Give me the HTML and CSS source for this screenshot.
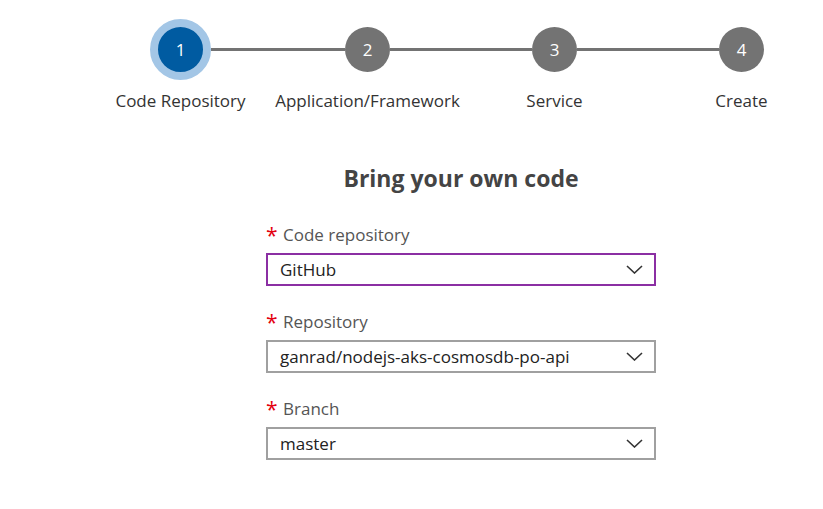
FILE: index.html
```html
<!DOCTYPE html>
<html>
<head>
<meta charset="utf-8">
<link rel="stylesheet" href="styles.css">
</head>
<body>
<div class="page">
  <ol class="steps">
    <li class="step step-first step-active">
      <div class="track"><span class="seg"></span><span class="dot"><span class="num">1</span></span><span class="seg"></span></div>
      <div class="label">Code Repository</div>
    </li>
    <li class="step">
      <div class="track"><span class="seg"></span><span class="dot"><span class="num">2</span></span><span class="seg"></span></div>
      <div class="label">Application/Framework</div>
    </li>
    <li class="step">
      <div class="track"><span class="seg"></span><span class="dot"><span class="num">3</span></span><span class="seg"></span></div>
      <div class="label">Service</div>
    </li>
    <li class="step step-last">
      <div class="track"><span class="seg"></span><span class="dot"><span class="num">4</span></span><span class="seg"></span></div>
      <div class="label">Create</div>
    </li>
  </ol>

  <main class="form">
    <h1 class="title">Bring your own code</h1>

    <div class="field">
      <div class="field-label"><span class="req">*</span>Code repository</div>
      <div class="select select-focused"><span class="value">GitHub</span>
        <svg class="chev" width="17" height="9" viewBox="0 0 17 9"><path d="M1 1 L8.5 8 L16 1" fill="none" stroke="#333" stroke-width="1.6"/></svg>
      </div>
    </div>

    <div class="field">
      <div class="field-label"><span class="req">*</span>Repository</div>
      <div class="select"><span class="value">ganrad/nodejs-aks-cosmosdb-po-api</span>
        <svg class="chev" width="17" height="9" viewBox="0 0 17 9"><path d="M1 1 L8.5 8 L16 1" fill="none" stroke="#333" stroke-width="1.6"/></svg>
      </div>
    </div>

    <div class="field">
      <div class="field-label"><span class="req">*</span>Branch</div>
      <div class="select"><span class="value">master</span>
        <svg class="chev" width="17" height="9" viewBox="0 0 17 9"><path d="M1 1 L8.5 8 L16 1" fill="none" stroke="#333" stroke-width="1.6"/></svg>
      </div>
    </div>
  </main>
</div>
</body>
</html>
```

FILE: styles.css
```css
* { box-sizing: border-box; }
html, body { margin: 0; padding: 0; background: #fff; overflow: hidden; }
body {
  font-family: "Open Sans", "Noto Sans", "Liberation Sans", sans-serif;
  color: #333;
  width: 823px;
  height: 509px;
}
.page { padding-top: 19px; }

.steps {
  list-style: none;
  margin: 0 0 0 87px;
  padding: 0;
  display: grid;
  grid-template-columns: repeat(4, 187px);
  width: 748px;
}
.step { display: flex; flex-direction: column; align-items: center; }
.track {
  display: flex;
  align-items: center;
  width: 100%;
  height: 61px;
}
.seg { flex: 1; height: 3px; background: #737373; }
.step-first .seg:first-child,
.step-last .seg:last-child { background: transparent; }
.dot {
  width: 45px;
  height: 45px;
  border-radius: 50%;
  background: #737373;
  color: #fff;
  display: flex;
  align-items: center;
  justify-content: center;
  flex: none;
}
.step-active .dot {
  width: 61px;
  height: 61px;
  background: #005ba1;
  border: 8px solid #a3c6e6;
}
.num { font-size: 17px; line-height: 1; }
.label {
  margin-top: 9px;
  font-size: 17px;
  line-height: 24px;
  color: #333;
  white-space: nowrap;
}

.form {
  margin-left: 266px;
  width: 390px;
}
.title {
  margin: 49px 0 0;
  text-align: center;
  font-size: 23px;
  font-weight: 700;
  color: #444;
  line-height: 32px;
}
.field { margin-top: 29px; }
.field + .field { margin-top: 24px; }
.field-label {
  font-size: 17px;
  color: #555;
  line-height: 24px;
  height: 24px;
  display: flex;
  align-items: baseline;
}
.req {
  color: #e3000f;
  font-size: 21px;
  width: 17px;
  line-height: 1;
  position: relative;
  top: 2px;
}
.select {
  margin-top: 6px;
  height: 33px;
  border: 2px solid #a0a0a0;
  display: flex;
  align-items: center;
  justify-content: space-between;
  padding: 0 11px 0 12px;
}
.select-focused { border-color: #8b2fa3; }
.value { font-size: 17px; color: #222; }
.chev { flex: none; }
```
